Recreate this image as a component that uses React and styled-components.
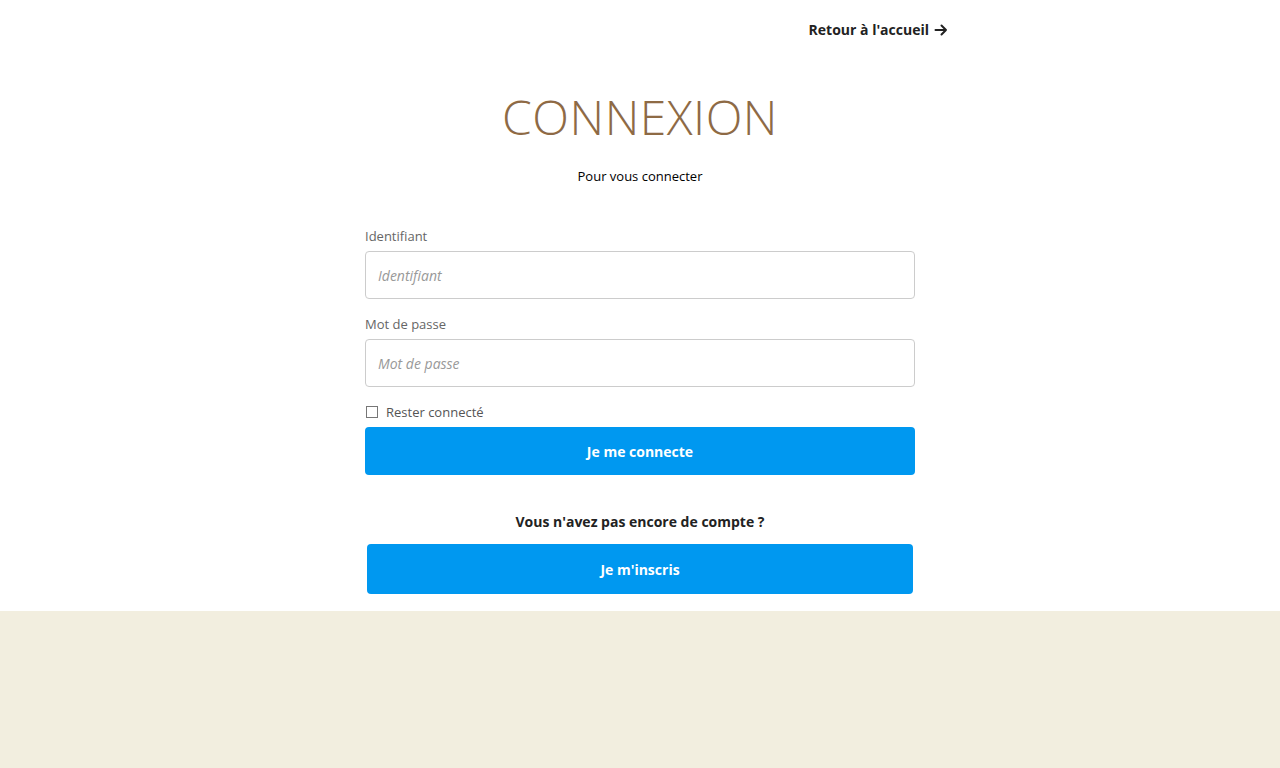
import React from "react";
import styled, { createGlobalStyle } from "styled-components";

const GlobalStyle = createGlobalStyle`
  html, body {
    margin: 0;
    padding: 0;
    height: 100%;
    background: #f2eedf;
  }
  body {
    font-family: "Open Sans", "Noto Sans", sans-serif;
  }
  * { box-sizing: border-box; }
`;

export default function App() {
  return (
    <>
      <GlobalStyle />
      <Page>
        <TopBar>
          <BackLink href="#">
            Retour à l'accueil
            <ArrowIcon />
          </BackLink>
        </TopBar>
        <Title>CONNEXION</Title>
        <Subtitle>Pour vous connecter</Subtitle>
        <Form onSubmit={e => e.preventDefault()}>
          <Field>
            <Label htmlFor="login">Identifiant</Label>
            <Input id="login" placeholder="Identifiant" />
          </Field>
          <Field last>
            <Label htmlFor="pass">Mot de passe</Label>
            <Input id="pass" type="password" placeholder="Mot de passe" />
          </Field>
          <CheckRow>
            <Checkbox type="checkbox" />
            Rester connecté
          </CheckRow>
          <Button type="submit" height={48}>Je me connecte</Button>
        </Form>
        <Signup>
          <SignupText>Vous n'avez pas encore de compte ?</SignupText>
          <Button type="button" height={50} inset>Je m'inscris</Button>
        </Signup>
      </Page>
    </>
  );
}

function ArrowIcon() {
  return (
    <svg width="14" height="14" viewBox="0 0 14 14" fill="none">
      <path
        d="M1.5 7h10.5M7.5 2.5L12 7l-4.5 4.5"
        stroke="#222"
        strokeWidth="2"
        strokeLinecap="round"
        strokeLinejoin="round"
      />
    </svg>
  );
}

const Page = styled.main`
  background: #fff;
  display: flex;
  flex-direction: column;
  align-items: center;
  padding: 20px 0 17px;
`;

const TopBar = styled.div`
  width: 616px;
  display: flex;
  justify-content: flex-end;
`;

const BackLink = styled.a`
  display: flex;
  align-items: center;
  gap: 5px;
  color: #222;
  font-size: 14px;
  font-weight: 700;
  text-decoration: none;
  line-height: 20px;
`;

const Title = styled.h1`
  margin: 47px 0 0;
  font-size: 48px;
  font-weight: 300;
  line-height: 60px;
  color: #8e6a45;
  letter-spacing: 0.5px;
`;

const Subtitle = styled.p`
  margin: 19px 0 0;
  font-size: 13px;
  line-height: 20px;
  color: #000;
`;

const Form = styled.form`
  width: 550px;
  margin-top: 40px;
  display: flex;
  flex-direction: column;
`;

const Field = styled.div`
  display: flex;
  flex-direction: column;
  gap: 5px;
  margin-bottom: ${props => (props.last ? "15px" : "15px")};
`;

const Label = styled.label`
  font-size: 13px;
  line-height: 20px;
  color: #666;
`;

const Input = styled.input`
  height: 48px;
  border: 1px solid #cccccc;
  border-radius: 4px;
  padding: 0 12px;
  font-family: inherit;
  font-size: 14px;
  color: #333;
  outline: none;
  &::placeholder {
    color: #999;
    font-style: italic;
  }
`;

const CheckRow = styled.label`
  display: flex;
  align-items: center;
  gap: 8px;
  font-size: 13px;
  line-height: 20px;
  color: #555;
  margin-bottom: 5px;
`;

const Checkbox = styled.input`
  appearance: none;
  width: 12px;
  height: 12px;
  margin: 0 0 0 1px;
  border: 1px solid #777;
  border-radius: 0;
  background: #fff;
`;

const Button = styled.button`
  height: ${props => props.height}px;
  width: ${props => (props.inset ? "546px" : "100%")};
  align-self: center;
  border: none;
  border-radius: 4px;
  background: #0098f0;
  color: #fff;
  font-family: inherit;
  font-size: 14px;
  font-weight: 700;
  cursor: pointer;
`;

const Signup = styled.div`
  display: flex;
  flex-direction: column;
  align-items: center;
  margin-top: 37px;
  width: 550px;
`;

const SignupText = styled.p`
  margin: 0 0 12px;
  font-size: 14px;
  font-weight: 700;
  line-height: 20px;
  color: #222;
`;
